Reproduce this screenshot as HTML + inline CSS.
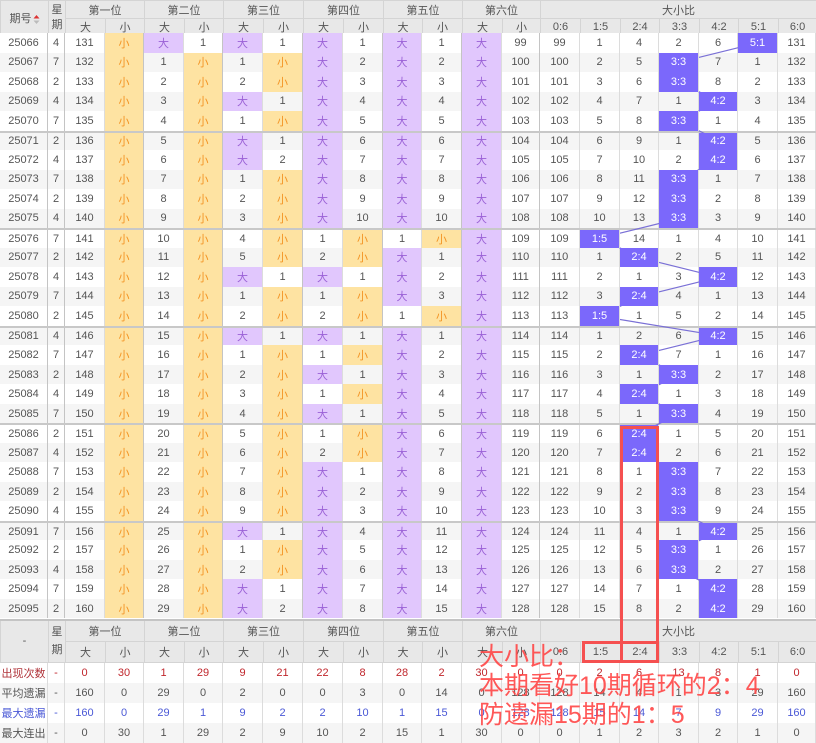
<!DOCTYPE html>
<html><head><meta charset="utf-8">
<style>
*{margin:0;padding:0;box-sizing:border-box}
body{width:816px;height:743px;overflow:hidden;background:#fff;font-family:"Liberation Sans","Noto Sans CJK SC",sans-serif;font-size:11px;color:#555;position:relative}
table{border-collapse:collapse;table-layout:fixed;width:816px}
th{font-weight:normal;background:#e8e8e8;border:1px solid #d4d4d4;color:#555;text-align:center;padding:0;font-size:11px}
.r{display:grid;grid-template-columns:48px 17px 40px 39px 40px 39px 40px 40px 40px 40px 39px 40px 40px 38px 40px 40px 39px 40px 39px 40px 38px;height:19.53px;background:#fff}
.r.a{background:#f5f5f5}
.r.g{border-top:2px solid #c8c8c8}
.r i{font-style:normal;display:flex;align-items:center;justify-content:center;border-right:1px solid #dcdcdc}
.r i:nth-child(1),.r i:nth-child(2),.r i:nth-child(4),.r i:nth-child(6),.r i:nth-child(8),.r i:nth-child(10),.r i:nth-child(12),.r i:nth-child(14){border-right-color:#c4c4c4}
.r i.s{background:#fee3a2;color:#f39424}
.r i.b{background:#e1c7fd;color:#9a61d6}
.r i.h{background:#7b68fb;color:#fff;position:relative;z-index:2}
#ln{position:absolute;left:0;top:0;z-index:1}
.st{display:grid;grid-template-columns:48px 17px 40px 39px 40px 39px 40px 40px 40px 40px 39px 40px 40px 38px 40px 40px 39px 40px 39px 40px 38px;height:20px}
.st i{font-style:normal;display:flex;align-items:center;justify-content:center;border-right:1px solid #dcdcdc}
.st.a{background:#f5f5f5}
.red i{color:#c0262c}.red i:first-child{color:#b0343a}
.blu i{color:#4a58d6}
.ann{position:absolute;border:3px solid #f55050;z-index:5}
.txt{position:absolute;left:479px;top:643px;font-size:25px;line-height:29px;color:rgba(255,70,70,.9);font-family:"Liberation Sans","Noto Sans CJK SC",sans-serif;z-index:6;white-space:nowrap}
.arr{display:inline-block;vertical-align:middle;margin-left:1px;width:7px}
</style></head><body>
<table>
<colgroup><col style="width:48px"><col style="width:17px"><col style="width:40px"><col style="width:39px"><col style="width:40px"><col style="width:39px"><col style="width:40px"><col style="width:40px"><col style="width:40px"><col style="width:40px"><col style="width:39px"><col style="width:40px"><col style="width:40px"><col style="width:38px"><col style="width:40px"><col style="width:40px"><col style="width:39px"><col style="width:40px"><col style="width:39px"><col style="width:40px"><col style="width:38px"></colgroup>
<tr style="height:18px"><th rowspan="2">期号<svg class="arr" width="7" height="11" viewBox="0 0 7 11"><path d="M0.5 4.5L3.5 1L6.5 4.5Z" fill="#d33"/><path d="M0.5 6.5L3.5 10L6.5 6.5Z" fill="#bbb"/></svg></th><th rowspan="2" style="line-height:15px">星<br>期</th><th colspan="2">第一位</th><th colspan="2">第二位</th><th colspan="2">第三位</th><th colspan="2">第四位</th><th colspan="2">第五位</th><th colspan="2">第六位</th><th colspan="7">大小比</th></tr>
<tr style="height:15px"><th>大</th><th>小</th><th>大</th><th>小</th><th>大</th><th>小</th><th>大</th><th>小</th><th>大</th><th>小</th><th>大</th><th>小</th><th>0:6</th><th>1:5</th><th>2:4</th><th>3:3</th><th>4:2</th><th>5:1</th><th>6:0</th></tr>
</table>
<div style="position:absolute;left:0;top:33px;width:816px">
<div class="r"><i>25066</i><i>4</i><i>131</i><i class="s">小</i><i class="b">大</i><i>1</i><i class="b">大</i><i>1</i><i class="b">大</i><i>1</i><i class="b">大</i><i>1</i><i class="b">大</i><i>99</i><i>99</i><i>1</i><i>4</i><i>2</i><i>6</i><i class="h">5:1</i><i>131</i></div>
<div class="r a"><i>25067</i><i>7</i><i>132</i><i class="s">小</i><i>1</i><i class="s">小</i><i>1</i><i class="s">小</i><i class="b">大</i><i>2</i><i class="b">大</i><i>2</i><i class="b">大</i><i>100</i><i>100</i><i>2</i><i>5</i><i class="h">3:3</i><i>7</i><i>1</i><i>132</i></div>
<div class="r"><i>25068</i><i>2</i><i>133</i><i class="s">小</i><i>2</i><i class="s">小</i><i>2</i><i class="s">小</i><i class="b">大</i><i>3</i><i class="b">大</i><i>3</i><i class="b">大</i><i>101</i><i>101</i><i>3</i><i>6</i><i class="h">3:3</i><i>8</i><i>2</i><i>133</i></div>
<div class="r a"><i>25069</i><i>4</i><i>134</i><i class="s">小</i><i>3</i><i class="s">小</i><i class="b">大</i><i>1</i><i class="b">大</i><i>4</i><i class="b">大</i><i>4</i><i class="b">大</i><i>102</i><i>102</i><i>4</i><i>7</i><i>1</i><i class="h">4:2</i><i>3</i><i>134</i></div>
<div class="r"><i>25070</i><i>7</i><i>135</i><i class="s">小</i><i>4</i><i class="s">小</i><i>1</i><i class="s">小</i><i class="b">大</i><i>5</i><i class="b">大</i><i>5</i><i class="b">大</i><i>103</i><i>103</i><i>5</i><i>8</i><i class="h">3:3</i><i>1</i><i>4</i><i>135</i></div>
<div class="r a g"><i>25071</i><i>2</i><i>136</i><i class="s">小</i><i>5</i><i class="s">小</i><i class="b">大</i><i>1</i><i class="b">大</i><i>6</i><i class="b">大</i><i>6</i><i class="b">大</i><i>104</i><i>104</i><i>6</i><i>9</i><i>1</i><i class="h">4:2</i><i>5</i><i>136</i></div>
<div class="r"><i>25072</i><i>4</i><i>137</i><i class="s">小</i><i>6</i><i class="s">小</i><i class="b">大</i><i>2</i><i class="b">大</i><i>7</i><i class="b">大</i><i>7</i><i class="b">大</i><i>105</i><i>105</i><i>7</i><i>10</i><i>2</i><i class="h">4:2</i><i>6</i><i>137</i></div>
<div class="r a"><i>25073</i><i>7</i><i>138</i><i class="s">小</i><i>7</i><i class="s">小</i><i>1</i><i class="s">小</i><i class="b">大</i><i>8</i><i class="b">大</i><i>8</i><i class="b">大</i><i>106</i><i>106</i><i>8</i><i>11</i><i class="h">3:3</i><i>1</i><i>7</i><i>138</i></div>
<div class="r"><i>25074</i><i>2</i><i>139</i><i class="s">小</i><i>8</i><i class="s">小</i><i>2</i><i class="s">小</i><i class="b">大</i><i>9</i><i class="b">大</i><i>9</i><i class="b">大</i><i>107</i><i>107</i><i>9</i><i>12</i><i class="h">3:3</i><i>2</i><i>8</i><i>139</i></div>
<div class="r a"><i>25075</i><i>4</i><i>140</i><i class="s">小</i><i>9</i><i class="s">小</i><i>3</i><i class="s">小</i><i class="b">大</i><i>10</i><i class="b">大</i><i>10</i><i class="b">大</i><i>108</i><i>108</i><i>10</i><i>13</i><i class="h">3:3</i><i>3</i><i>9</i><i>140</i></div>
<div class="r g"><i>25076</i><i>7</i><i>141</i><i class="s">小</i><i>10</i><i class="s">小</i><i>4</i><i class="s">小</i><i>1</i><i class="s">小</i><i>1</i><i class="s">小</i><i class="b">大</i><i>109</i><i>109</i><i class="h">1:5</i><i>14</i><i>1</i><i>4</i><i>10</i><i>141</i></div>
<div class="r a"><i>25077</i><i>2</i><i>142</i><i class="s">小</i><i>11</i><i class="s">小</i><i>5</i><i class="s">小</i><i>2</i><i class="s">小</i><i class="b">大</i><i>1</i><i class="b">大</i><i>110</i><i>110</i><i>1</i><i class="h">2:4</i><i>2</i><i>5</i><i>11</i><i>142</i></div>
<div class="r"><i>25078</i><i>4</i><i>143</i><i class="s">小</i><i>12</i><i class="s">小</i><i class="b">大</i><i>1</i><i class="b">大</i><i>1</i><i class="b">大</i><i>2</i><i class="b">大</i><i>111</i><i>111</i><i>2</i><i>1</i><i>3</i><i class="h">4:2</i><i>12</i><i>143</i></div>
<div class="r a"><i>25079</i><i>7</i><i>144</i><i class="s">小</i><i>13</i><i class="s">小</i><i>1</i><i class="s">小</i><i>1</i><i class="s">小</i><i class="b">大</i><i>3</i><i class="b">大</i><i>112</i><i>112</i><i>3</i><i class="h">2:4</i><i>4</i><i>1</i><i>13</i><i>144</i></div>
<div class="r"><i>25080</i><i>2</i><i>145</i><i class="s">小</i><i>14</i><i class="s">小</i><i>2</i><i class="s">小</i><i>2</i><i class="s">小</i><i>1</i><i class="s">小</i><i class="b">大</i><i>113</i><i>113</i><i class="h">1:5</i><i>1</i><i>5</i><i>2</i><i>14</i><i>145</i></div>
<div class="r a g"><i>25081</i><i>4</i><i>146</i><i class="s">小</i><i>15</i><i class="s">小</i><i class="b">大</i><i>1</i><i class="b">大</i><i>1</i><i class="b">大</i><i>1</i><i class="b">大</i><i>114</i><i>114</i><i>1</i><i>2</i><i>6</i><i class="h">4:2</i><i>15</i><i>146</i></div>
<div class="r"><i>25082</i><i>7</i><i>147</i><i class="s">小</i><i>16</i><i class="s">小</i><i>1</i><i class="s">小</i><i>1</i><i class="s">小</i><i class="b">大</i><i>2</i><i class="b">大</i><i>115</i><i>115</i><i>2</i><i class="h">2:4</i><i>7</i><i>1</i><i>16</i><i>147</i></div>
<div class="r a"><i>25083</i><i>2</i><i>148</i><i class="s">小</i><i>17</i><i class="s">小</i><i>2</i><i class="s">小</i><i class="b">大</i><i>1</i><i class="b">大</i><i>3</i><i class="b">大</i><i>116</i><i>116</i><i>3</i><i>1</i><i class="h">3:3</i><i>2</i><i>17</i><i>148</i></div>
<div class="r"><i>25084</i><i>4</i><i>149</i><i class="s">小</i><i>18</i><i class="s">小</i><i>3</i><i class="s">小</i><i>1</i><i class="s">小</i><i class="b">大</i><i>4</i><i class="b">大</i><i>117</i><i>117</i><i>4</i><i class="h">2:4</i><i>1</i><i>3</i><i>18</i><i>149</i></div>
<div class="r a"><i>25085</i><i>7</i><i>150</i><i class="s">小</i><i>19</i><i class="s">小</i><i>4</i><i class="s">小</i><i class="b">大</i><i>1</i><i class="b">大</i><i>5</i><i class="b">大</i><i>118</i><i>118</i><i>5</i><i>1</i><i class="h">3:3</i><i>4</i><i>19</i><i>150</i></div>
<div class="r g"><i>25086</i><i>2</i><i>151</i><i class="s">小</i><i>20</i><i class="s">小</i><i>5</i><i class="s">小</i><i>1</i><i class="s">小</i><i class="b">大</i><i>6</i><i class="b">大</i><i>119</i><i>119</i><i>6</i><i class="h">2:4</i><i>1</i><i>5</i><i>20</i><i>151</i></div>
<div class="r a"><i>25087</i><i>4</i><i>152</i><i class="s">小</i><i>21</i><i class="s">小</i><i>6</i><i class="s">小</i><i>2</i><i class="s">小</i><i class="b">大</i><i>7</i><i class="b">大</i><i>120</i><i>120</i><i>7</i><i class="h">2:4</i><i>2</i><i>6</i><i>21</i><i>152</i></div>
<div class="r"><i>25088</i><i>7</i><i>153</i><i class="s">小</i><i>22</i><i class="s">小</i><i>7</i><i class="s">小</i><i class="b">大</i><i>1</i><i class="b">大</i><i>8</i><i class="b">大</i><i>121</i><i>121</i><i>8</i><i>1</i><i class="h">3:3</i><i>7</i><i>22</i><i>153</i></div>
<div class="r a"><i>25089</i><i>2</i><i>154</i><i class="s">小</i><i>23</i><i class="s">小</i><i>8</i><i class="s">小</i><i class="b">大</i><i>2</i><i class="b">大</i><i>9</i><i class="b">大</i><i>122</i><i>122</i><i>9</i><i>2</i><i class="h">3:3</i><i>8</i><i>23</i><i>154</i></div>
<div class="r"><i>25090</i><i>4</i><i>155</i><i class="s">小</i><i>24</i><i class="s">小</i><i>9</i><i class="s">小</i><i class="b">大</i><i>3</i><i class="b">大</i><i>10</i><i class="b">大</i><i>123</i><i>123</i><i>10</i><i>3</i><i class="h">3:3</i><i>9</i><i>24</i><i>155</i></div>
<div class="r a g"><i>25091</i><i>7</i><i>156</i><i class="s">小</i><i>25</i><i class="s">小</i><i class="b">大</i><i>1</i><i class="b">大</i><i>4</i><i class="b">大</i><i>11</i><i class="b">大</i><i>124</i><i>124</i><i>11</i><i>4</i><i>1</i><i class="h">4:2</i><i>25</i><i>156</i></div>
<div class="r"><i>25092</i><i>2</i><i>157</i><i class="s">小</i><i>26</i><i class="s">小</i><i>1</i><i class="s">小</i><i class="b">大</i><i>5</i><i class="b">大</i><i>12</i><i class="b">大</i><i>125</i><i>125</i><i>12</i><i>5</i><i class="h">3:3</i><i>1</i><i>26</i><i>157</i></div>
<div class="r a"><i>25093</i><i>4</i><i>158</i><i class="s">小</i><i>27</i><i class="s">小</i><i>2</i><i class="s">小</i><i class="b">大</i><i>6</i><i class="b">大</i><i>13</i><i class="b">大</i><i>126</i><i>126</i><i>13</i><i>6</i><i class="h">3:3</i><i>2</i><i>27</i><i>158</i></div>
<div class="r"><i>25094</i><i>7</i><i>159</i><i class="s">小</i><i>28</i><i class="s">小</i><i class="b">大</i><i>1</i><i class="b">大</i><i>7</i><i class="b">大</i><i>14</i><i class="b">大</i><i>127</i><i>127</i><i>14</i><i>7</i><i>1</i><i class="h">4:2</i><i>28</i><i>159</i></div>
<div class="r a"><i>25095</i><i>2</i><i>160</i><i class="s">小</i><i>29</i><i class="s">小</i><i class="b">大</i><i>2</i><i class="b">大</i><i>8</i><i class="b">大</i><i>15</i><i class="b">大</i><i>128</i><i>128</i><i>15</i><i>8</i><i>2</i><i class="h">4:2</i><i>29</i><i>160</i></div>
</div>
<svg id="ln" width="816" height="743"><polyline fill="none" stroke="#7a70d6" stroke-width="1.2" points="758,42.8 679,62.3 679,81.9 718.5,101.4 679,120.9 718.5,140.5 718.5,160 679,179.5 679,199 679,218.6 600,238.1 639.5,257.6 718.5,277.2 639.5,296.7 600,316.2 718.5,335.7 639.5,355.3 679,374.8 639.5,394.3 679,413.9 639.5,433.4 639.5,452.9 679,472.5 679,492 679,511.5 718.5,531.1 679,550.6 679,570.1 718.5,589.6 718.5,609.2"/></svg>
<table style="position:absolute;left:0;top:619px;border-top:2px solid #c4c4c4">
<colgroup><col style="width:48px"><col style="width:17px"><col style="width:40px"><col style="width:39px"><col style="width:40px"><col style="width:39px"><col style="width:40px"><col style="width:40px"><col style="width:40px"><col style="width:40px"><col style="width:39px"><col style="width:40px"><col style="width:40px"><col style="width:38px"><col style="width:40px"><col style="width:40px"><col style="width:39px"><col style="width:40px"><col style="width:39px"><col style="width:40px"><col style="width:38px"></colgroup>
<tr style="height:21px"><th rowspan="2">-</th><th rowspan="2" style="line-height:18px">星<br>期</th><th colspan="2">第一位</th><th colspan="2">第二位</th><th colspan="2">第三位</th><th colspan="2">第四位</th><th colspan="2">第五位</th><th colspan="2">第六位</th><th colspan="7">大小比</th></tr>
<tr style="height:21px"><th>大</th><th>小</th><th>大</th><th>小</th><th>大</th><th>小</th><th>大</th><th>小</th><th>大</th><th>小</th><th>大</th><th>小</th><th>0:6</th><th>1:5</th><th>2:4</th><th>3:3</th><th>4:2</th><th>5:1</th><th>6:0</th></tr>
</table>
<div style="position:absolute;left:0;top:663px;width:816px">
<div class="st red"><i>出现次数</i><i>-</i><i>0</i><i>30</i><i>1</i><i>29</i><i>9</i><i>21</i><i>22</i><i>8</i><i>28</i><i>2</i><i>30</i><i>0</i><i>0</i><i>2</i><i>6</i><i>13</i><i>8</i><i>1</i><i>0</i></div>
<div class="st a"><i>平均遗漏</i><i>-</i><i>160</i><i>0</i><i>29</i><i>0</i><i>2</i><i>0</i><i>0</i><i>3</i><i>0</i><i>14</i><i>0</i><i>128</i><i>128</i><i>14</i><i>4</i><i>1</i><i>3</i><i>29</i><i>160</i></div>
<div class="st blu"><i>最大遗漏</i><i>-</i><i>160</i><i>0</i><i>29</i><i>1</i><i>9</i><i>2</i><i>2</i><i>10</i><i>1</i><i>15</i><i>0</i><i>128</i><i>128</i><i>15</i><i>14</i><i>7</i><i>9</i><i>29</i><i>160</i></div>
<div class="st a"><i>最大连出</i><i>-</i><i>0</i><i>30</i><i>1</i><i>29</i><i>2</i><i>9</i><i>10</i><i>2</i><i>15</i><i>1</i><i>30</i><i>0</i><i>0</i><i>1</i><i>2</i><i>3</i><i>2</i><i>1</i><i>0</i></div>
</div>
<div class="ann" style="left:620px;top:426px;width:39px;height:237px"></div>
<div class="ann" style="left:582px;top:641px;width:77px;height:22px"></div>
<div class="txt">大小比：<br>本期看好10期循环的2：4<br>防遗漏15期的1：5</div>
</body></html>
